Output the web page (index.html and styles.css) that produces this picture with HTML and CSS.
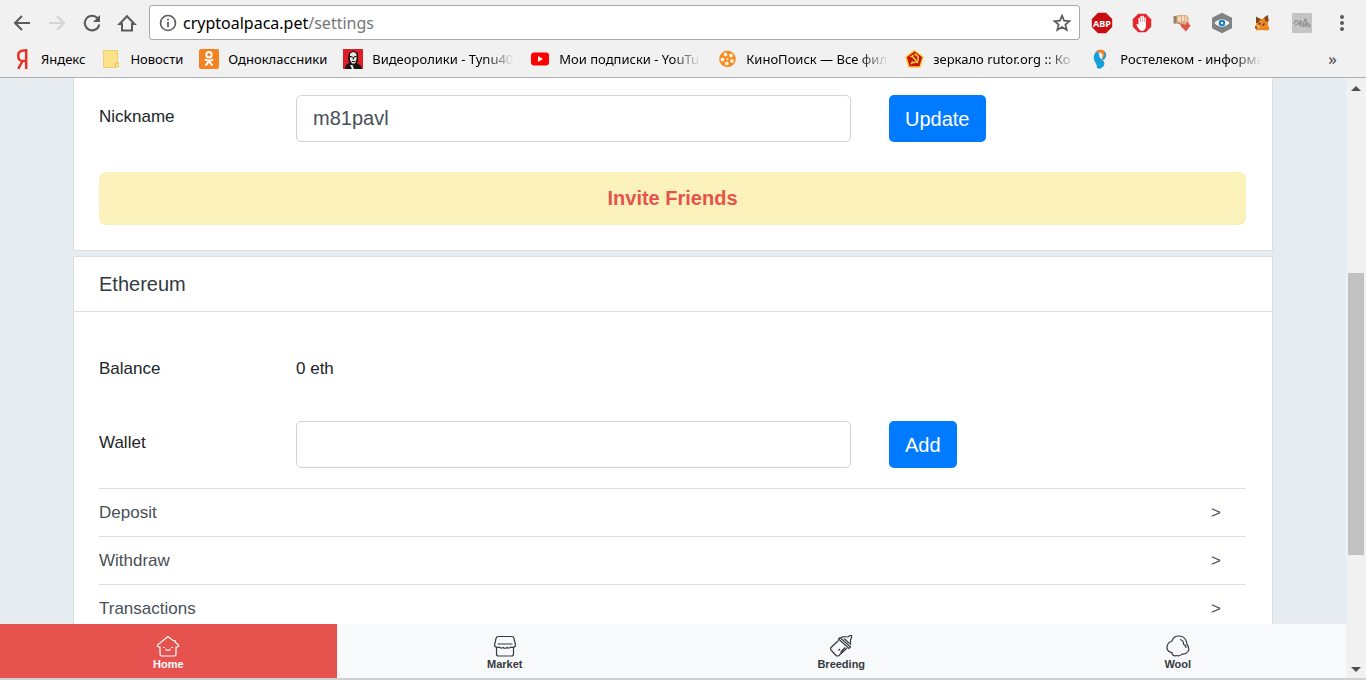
FILE: index.html
```html
<!DOCTYPE html>
<html lang="en">
<head>
<meta charset="utf-8">
<title>CryptoAlpaca settings</title>
<link rel="stylesheet" href="styles.css">
</head>
<body>
<header class="chrome">
  <div class="toolbar">
    <div class="nav-buttons">
      <button class="tool" aria-label="Back"><svg width="20" height="20" viewBox="0 0 20 20"><path d="M18 10H3M10 3l-7 7 7 7" fill="none" stroke="#5a5a5a" stroke-width="2"/></svg></button>
      <button class="tool" aria-label="Forward" disabled><svg width="20" height="20" viewBox="0 0 20 20"><path d="M2 10h15M10 3l7 7-7 7" fill="none" stroke="#d4d4d4" stroke-width="2"/></svg></button>
      <button class="tool" aria-label="Reload"><svg width="20" height="20" viewBox="0 0 20 20"><path d="M15.600 5.200A7.300 7.300 0 1 0 17.300 11.500" fill="none" stroke="#5a5a5a" stroke-width="2.100"/><path d="M18 2v7h-7z" fill="#5a5a5a"/></svg></button>
      <button class="tool" aria-label="Home page"><svg width="20" height="20" viewBox="0 0 20 20"><path d="M2.500 11L10 3.200 17.500 11H15v6.500H5V11z" fill="none" stroke="#5a5a5a" stroke-width="2"/></svg></button>
    </div>
    <div class="omnibox">
      <svg width="18" height="18" viewBox="0 0 18 18"><circle cx="9" cy="9" r="7.500" fill="none" stroke="#5a5a5a" stroke-width="1.600"/><path d="M9 8v5M9 4.700v1.800" stroke="#5a5a5a" stroke-width="1.800"/></svg>
      <div class="url">cryptoalpaca.pet<span class="url-path">/settings</span></div>
      <button class="tool" aria-label="Bookmark this page"><svg width="20" height="20" viewBox="0 0 20 20"><path d="M10 2.600l2.100 5 5.400.5-4.100 3.500 1.300 5.300L10 14l-4.700 2.900 1.300-5.300L2.500 8.100l5.400-.5z" fill="none" stroke="#5a5a5a" stroke-width="1.700"/></svg></button>
    </div>
    <div class="extensions">
      <button class="tool" aria-label="Adblock Plus"><svg width="22" height="22" viewBox="0 0 22 22"><path d="M7 .8h8L21.200 7v8L15 21.200H7L.8 15V7z" fill="#c70d12"/><text x="11" y="14.500" text-anchor="middle" class="abp">ABP</text></svg></button>
      <button class="tool" aria-label="AdBlock"><svg width="20" height="20" viewBox="0 0 20 20"><path d="M6.200.8h7.600l5.400 5.400v7.600l-5.400 5.400H6.200L.8 13.800V6.200z" fill="#e3262e"/><path d="M6.500 11V5.200q.8-1.200 1.500 0V9h.5V3.300q.8-1.200 1.500 0V9h.4V2.900q.9-1 1.600.3V9.300h.4V4.600q.9-1 1.500.2V14q-1 4-4.200 4-2.200-.3-3.600-3L4.300 11.300q1-1.200 2.200.6z" fill="#fff"/></svg></button>
      <button class="tool" aria-label="Hand tool"><svg width="20" height="20" viewBox="0 0 20 20"><path d="M2 3.500L6 2h8l2.500 2v7L13 13.500 7 10.500H2z" fill="#dcae85"/><path d="M1.500 3h3v7.500h-3z" fill="#94826f"/><path d="M6 3.500h3v5H6zM10 3h2v5h-2zM13 3.500h1.500v5H13z" fill="#f6dcc0"/><path d="M5.500 10l4 1.500 2 2" fill="none" stroke="#a5714b"/><path d="M10 10.500l3 1.500 3-3 1.500 3H19l-5 6.500L8.500 13z" fill="#de5348"/></svg></button>
      <button class="tool" aria-label="Privacy eye"><svg width="22" height="22" viewBox="0 0 22 22"><path d="M11 .8l10 5v10.400l-10 5-10-5V5.800z" fill="#808284"/><path d="M3.500 11Q11 3.500 18.500 11 11 18.500 3.500 11z" fill="#fff"/><circle cx="11" cy="11" r="3.300" fill="#1c7fb4"/><circle cx="11" cy="11" r="1.200" fill="#e9f5fa"/></svg></button>
      <button class="tool" aria-label="MetaMask"><svg width="20" height="20" viewBox="0 0 20 20"><path d="M5 5l5 1 5-3 1.500 3-.5 6 1.500 4-2 1.500-6-.5-5 .5L3 14l2-4z" fill="#ee8524"/><path d="M4 3.500L8.500 6 7 9l-3 1.500zM12 4.500L16 2l.5 6L14 9z" fill="#804820"/><path d="M3 12l4 .5 1.500 3-4-.5z" fill="#f7ab52"/><path d="M6.500 10.500l2 .5M12.500 10.500l-2 2" stroke="#5c3520" stroke-width="1.300"/><circle cx="4" cy="14.500" r="1" fill="#3b2a22"/></svg></button>
      <button class="tool" aria-label="Disabled extension"><svg width="20" height="20" viewBox="0 0 20 20"><rect width="20" height="20" rx="1" fill="#c4c4c4"/><path d="M2 11q2-6 4-2t3-1q2 7 3 1t3 1 3 2M3 13q3-4 5-1t5 0 5 0M8 7v6M14 6v8" fill="none" stroke="#929292" stroke-width="1.200"/></svg></button>
      <button class="tool" aria-label="Browser menu"><svg width="20" height="20" viewBox="0 0 20 20"><g fill="#5a5a5a"><circle cx="10" cy="4" r="2"/><circle cx="10" cy="10" r="2"/><circle cx="10" cy="16" r="2"/></g></svg></button>
    </div>
  </div>
  <nav class="bookmarks" aria-label="Bookmarks">
    <a class="bookmark" href="#"><svg width="20" height="20" viewBox="0 0 20 20"><path d="M14.200 0V20M14.200 1.500h-2.500Q6.200 1.500 6.200 6.800T11.200 12H14.200M10.500 12L6.200 20" fill="none" stroke="#e5332a" stroke-width="2.500"/></svg><span>Яндекс</span></a>
    <a class="bookmark" href="#"><svg width="20" height="20" viewBox="0 0 20 20"><path d="M2.500 1.500h14v12h1V18h-3v.5h-12z" fill="#fbe28b" stroke="#edcf72"/><path d="M14.500 18.500v-4.500h3" fill="none" stroke="#e5c261"/></svg><span>Новости</span></a>
    <a class="bookmark" href="#"><svg width="20" height="20" viewBox="0 0 20 20"><rect width="20" height="20" rx="2" fill="#f58220"/><g fill="none" stroke="#fff" stroke-width="2" stroke-linecap="round"><circle cx="10" cy="5.700" r="2.700"/><path d="M6.500 10.700q3.500 2.300 7 0M10 12.400l-3 3.500M10 12.400l3 3.500"/></g></svg><span>Одноклассники</span></a>
    <a class="bookmark long" href="#"><svg width="20" height="20" viewBox="0 0 20 20"><path d="M0 0h20v20H0z" fill="#dd2027"/><path d="M2 20l1-4 3-2-1-5 1-5 4-2.500 5 2.500v8l-1 2 4 3 1 3z" fill="#181414"/><path d="M7 5q3-4 6.500 0v5l-1.500 4.500h-3L7 11z" fill="#eee5df"/><path d="M7 7.500l2.500.3M11 7.800l2.500-.3M10.300 8v2.500M8.800 12.500h3" stroke="#181414" stroke-width="1.200"/><path d="M7 16l2 4h2l-1.500-4z" fill="#eee"/></svg><span>Видеоролики - Tynu40</span></a>
    <a class="bookmark long" href="#"><svg width="20" height="20" viewBox="0 0 20 20"><rect x="1" y="3.500" width="18" height="13" rx="3" fill="#f00"/><path d="M8 7l5 3-5 3z" fill="#fff"/></svg><span>Мои подписки - YouTu</span></a>
    <a class="bookmark long" href="#"><svg width="20" height="20" viewBox="0 0 20 20"><circle cx="10.500" cy="10" r="8.300" fill="#f58a22"/><g fill="#fff0d8"><circle cx="8.500" cy="5.500" r="1.900"/><circle cx="14" cy="6.500" r="1.900"/><circle cx="5.500" cy="10.500" r="1.900"/><circle cx="15" cy="12" r="1.900"/><circle cx="9.800" cy="14.500" r="1.900"/><circle cx="10.500" cy="10" r="1"/></g></svg><span>КиноПоиск — Все фил</span></a>
    <a class="bookmark long" href="#"><svg width="20" height="20" viewBox="0 0 20 20"><path d="M10.500 1.500l8.500 6.500-3 10H5L2 8z" fill="#c61508" stroke="#f9c83c" stroke-width="1.500" stroke-linejoin="round"/><path d="M10.500 5q5 2 3.500 6.500-1.700 3-6.500 1.500M6.500 8l3-2M8 7l6 7M7 15l2-2" fill="none" stroke="#ffd43e" stroke-width="1.500"/></svg><span>зеркало rutor.org :: Ко</span></a>
    <a class="bookmark long" href="#"><svg width="20" height="20" viewBox="0 0 20 20"><path d="M5 2.500Q1 8 4 13q2 2.500 2 6 2 1.500 4.500 0Q14.500 17 13 13q-1-2-3-3-3-3-1.500-6z" fill="#179fdc"/><path d="M4.500 3Q8-1 13 1.500q4 4 1 8-1.500 2-3.500 1 2-4 .5-6-2.500-2-6.500-1.500z" fill="#ee8027"/><path d="M13.500 2q3 4 0 8-1.500 1-3 .5 3.500-3.500 3-8.500z" fill="#179fdc"/></svg><span>Ростелеком - информа</span></a>
    <button class="overflow" aria-label="More bookmarks">»</button>
  </nav>
</header>
<div class="window">
  <div class="page">
    <main class="content">
      <section class="card card-profile">
        <form class="row">
          <label class="label" for="nickname">Nickname</label>
          <div class="field"><input class="input" id="nickname" type="text" value="m81pavl"></div>
          <div><button class="btn" type="button">Update</button></div>
        </form>
        <a class="invite" href="#">Invite Friends</a>
      </section>
      <section class="card">
        <h2 class="card-title">Ethereum</h2>
        <div class="card-body">
          <div class="row balance"><div>Balance</div><div>0 eth</div></div>
          <form class="row">
            <label class="label" for="wallet">Wallet</label>
            <div class="field"><input class="input" id="wallet" type="text"></div>
            <div><button class="btn" type="button">Add</button></div>
          </form>
          <div class="links">
            <a class="link" href="#"><span>Deposit</span><span>&gt;</span></a>
            <a class="link" href="#"><span>Withdraw</span><span>&gt;</span></a>
            <a class="link" href="#"><span>Transactions</span><span>&gt;</span></a>
          </div>
        </div>
      </section>
    </main>
    <nav class="tabs" aria-label="Main">
      <a class="tab active" href="#"><svg width="24" height="22" viewBox="0 0 24 22"><path d="M12 1.500L1.500 10q-.5 1.500 1 2H4v7.500q0 1.500 1.500 1.500h13q1.500 0 1.500-1.500V12h1.500q1.500-.5 1-2L19 7V5.500h-2z"/><path d="M9.500 14q2.500 3 5 0M7 12.500h1.500M15.500 12.500H17"/></svg>Home</a>
      <a class="tab" href="#"><svg width="24" height="22" viewBox="0 0 24 22"><path d="M5 1.500h14q1.500 0 2 2L22.500 10q0 2-2 2-1.500 1-3 0-1.500 2-3.500.5-2 1.500-4 0-2 1.500-3.500-.5-1.500 1-3 0-2 0-2-2L3 3.500q.5-2 2-2zM4.500 9h15M3.500 12.500V19q0 2 2 2h13q2 0 2-2v-6.500"/></svg>Market</a>
      <a class="tab" href="#"><svg width="24" height="22" viewBox="0 0 24 22"><path d="M9.500 5.500L2 12.500q-1 1.200 0 2.500l5 5.500q1.500 1 3 0l8-7.500M9.500 4l10.500 9.500 1.500-1.500L11 2.500zM12 3l2-1.500 5 .5 2-1.500h1.500v2.300L21.500 5v5M15 3.500l5.500 5M11.500 17.500l4.500-5M9.500 15.500l1.500-1.500"/></svg>Breeding</a>
      <a class="tab" href="#"><svg width="24" height="22" viewBox="0 0 24 22"><path d="M6 6Q7.500 1 12.500 1 18 1 20 5.500q1 2 1 4 3 3.500 1 7-2 3-6 2.500-2 2.500-5 1.500-2.500 1-4-.5-1.500-1.500-1-2.500-4-.5-5-4Q.500 8 6 6zM14 4.500q4 1 3.500 5M17.500 9.500q2.500.5 2.500 3.500"/></svg>Wool</a>
    </nav>
  </div>
  <div class="scrollbar" aria-hidden="true">
    <span class="arrow up"></span>
    <div class="track"><div class="thumb"></div></div>
    <span class="arrow down"></span>
  </div>
</div>
</body>
</html>
```
FILE: styles.css
```css
* { box-sizing: border-box; }

body {
  margin: 0;
  height: 100vh;
  display: flex;
  flex-direction: column;
  overflow: hidden;
  font-family: "Liberation Sans", Arial, sans-serif;
  font-size: 17px;
  line-height: 24px;
  color: #212529;
}

a { color: inherit; text-decoration: none; }
button, input { font: inherit; }
svg { flex: none; display: block; }

/* Browser chrome */
.chrome {
  flex: none;
  background: #f1f1f1;
  border-bottom: 1px solid #b0b0b0;
  font-family: "Noto Sans", sans-serif;
}
.toolbar {
  display: flex;
  align-items: center;
  height: 45px;
  padding-left: 12px;
}
.nav-buttons { display: flex; gap: 15px; margin-right: 12px; }
.tool {
  display: block;
  padding: 0;
  border: 0;
  background: none;
}
.omnibox {
  flex: 1;
  display: flex;
  align-items: center;
  height: 35px;
  padding: 0 7px 0 9px;
  background: #fff;
  border: 1px solid #a9a9a9;
  border-radius: 3px;
}
.url { flex: 1; margin-left: 6px; font-size: 16px; color: #000; }
.url-path { color: #777; }
.extensions { display: flex; align-items: center; margin: 0 4px 0 2px; }
.extensions .tool {
  display: flex;
  justify-content: center;
  width: 40px;
}
.abp { font: bold 9px "Noto Sans", sans-serif; fill: #fff; }

.bookmarks {
  display: flex;
  align-items: center;
  gap: 16px;
  height: 32px;
  padding: 0 29px 4px 12px;
  font-size: 13px;
  color: #000;
}
.bookmark {
  display: flex;
  align-items: center;
  gap: 9px;
  white-space: nowrap;
}
.long span {
  width: 142px;
  -webkit-mask-image: linear-gradient(to right, #000 80%, transparent);
  mask-image: linear-gradient(to right, #000 80%, transparent);
}
.overflow {
  margin-left: auto;
  padding: 0;
  border: 0;
  background: none;
  font-size: 17px;
  line-height: 20px;
  color: #444;
}

/* Page */
.window { flex: 1; min-height: 0; display: flex; border-bottom: 2px solid #d0d0d0; }
.page {
  flex: 1;
  min-width: 0;
  display: flex;
  flex-direction: column;
  background: #e6ebef;
}
.content { flex: 1; min-height: 0; overflow: hidden; }
.card {
  max-width: 1200px;
  margin: 0 auto 5px;
  background: #fff;
  border: 1px solid #dcdfe1;
}
.card-profile { padding: 17px 26px 25px 25px; border-top: 0; }
.row {
  display: grid;
  grid-template-columns: 197fr 593fr 357fr;
}
.label { padding-top: 10px; }
.field { padding-right: 38px; }
.input {
  display: block;
  width: 100%;
  height: 47px;
  padding: 0 16px;
  border: 1px solid #ced4da;
  border-radius: 5px;
  background: #fff;
  font-size: 20px;
  color: #495057;
}
.btn {
  display: block;
  height: 47px;
  padding: 0 16px;
  border: 0;
  border-radius: 5px;
  background: #007bff;
  font-size: 20px;
  color: #fff;
}
.invite {
  display: block;
  margin-top: 30px;
  padding: 14px;
  border-radius: 7px;
  background: #fbf1bb;
  text-align: center;
  font-size: 20px;
  font-weight: bold;
  line-height: 25px;
  color: #e6534f;
}
.card-title {
  margin: 0;
  padding: 15px 25px;
  border-bottom: 1px solid #dcdfe1;
  font-size: 20px;
  font-weight: normal;
  color: #343a40;
}
.card-body { padding: 45px 26px 45px 25px; }
.balance { margin-bottom: 40px; }
.links { margin-top: 20px; }
.link {
  display: flex;
  justify-content: space-between;
  height: 48px;
  padding: 12px 25px 0 0;
  border-top: 1px solid #dcdfe1;
  color: #495057;
}

.tabs {
  flex: none;
  display: grid;
  grid-template-columns: repeat(4, 1fr);
  background: #f8f9fb;
}
.tab {
  display: flex;
  flex-direction: column;
  align-items: center;
  height: 54px;
  padding-top: 11px;
  font-size: 11px;
  font-weight: bold;
  line-height: 14px;
  color: #343a40;
}
.tab svg { fill: none; stroke: currentColor; stroke-width: 1.2px; }
.active { background: #e6534f; color: #fff; }

/* Scrollbar */
.scrollbar {
  flex: none;
  width: 20px;
  display: flex;
  flex-direction: column;
  align-items: center;
  padding: 8px 0 6px;
  background: #f1f1f1;
}
.arrow { border: 5px solid transparent; }
.up { border-top: 0; border-bottom-color: #505050; }
.down { border-bottom: 0; border-top-color: #505050; }
.track {
  flex: 1;
  display: flex;
  flex-direction: column;
  margin: 5px 0;
}
.track::before { content: ""; flex: 177; }
.track::after { content: ""; flex: 107; }
.thumb { flex: 282; width: 16px; background: #c1c1c1; }
```
